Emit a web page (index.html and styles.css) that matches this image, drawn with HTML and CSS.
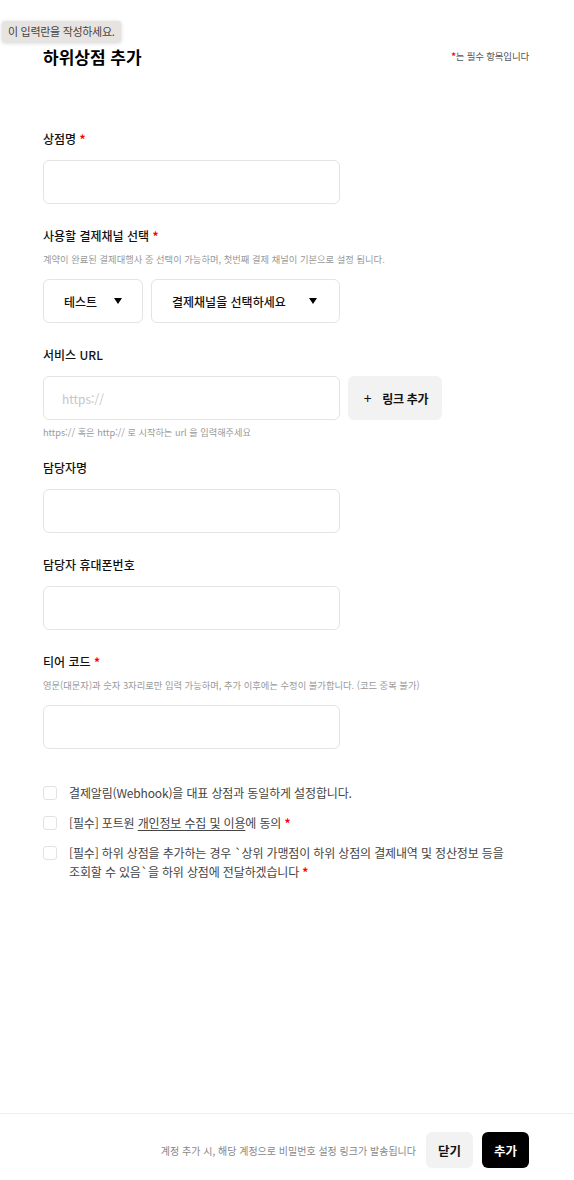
FILE: index.html
```html
<!DOCTYPE html>
<html lang="ko">
<head>
<meta charset="utf-8">
<title>하위상점 추가</title>
<link rel="stylesheet" href="styles.css">
</head>
<body>
<div class="page">
  <div class="tooltip">이 입력란을 작성하세요.</div>
  <main class="content">
    <header class="head">
      <h1 class="title">하위상점 추가</h1>
      <p class="req-note"><span class="star">*</span>는 필수 항목입니다</p>
    </header>

    <form class="form">
      <div class="field">
        <div class="field-head">
          <label class="label">상점명 <span class="star">*</span></label>
        </div>
        <div class="input"></div>
      </div>

      <div class="field">
        <div class="field-head">
          <label class="label">사용할 결제채널 선택 <span class="star">*</span></label>
          <p class="help">계약이 완료된 결제대행사 중 선택이 가능하며, 첫번째 결제 채널이 기본으로 설정 됩니다.</p>
        </div>
        <div class="row">
          <div class="select select-sm"><span>테스트</span><span class="caret"></span></div>
          <div class="select select-lg"><span>결제채널을 선택하세요</span><span class="caret"></span></div>
        </div>
      </div>

      <div class="field field-hint">
        <div class="field-head">
          <label class="label">서비스 URL</label>
        </div>
        <div class="row">
          <div class="input"><span class="placeholder">https://</span></div>
          <button type="button" class="link-btn"><span class="plus">+</span>링크 추가</button>
        </div>
        <p class="hint">https:// 혹은 http:// 로 시작하는 url 을 입력해주세요</p>
      </div>

      <div class="field">
        <div class="field-head">
          <label class="label">담당자명</label>
        </div>
        <div class="input"></div>
      </div>

      <div class="field">
        <div class="field-head">
          <label class="label">담당자 휴대폰번호</label>
        </div>
        <div class="input"></div>
      </div>

      <div class="field">
        <div class="field-head">
          <label class="label">티어 코드 <span class="star">*</span></label>
          <p class="help">영문(대문자)과 숫자 3자리로만 입력 가능하며, 추가 이후에는 수정이 불가합니다. (코드 중복 불가)</p>
        </div>
        <div class="input"></div>
      </div>
    </form>

    <ul class="checks">
      <li class="check"><span class="box"></span><span class="check-text">결제알림(Webhook)을 대표 상점과 동일하게 설정합니다.</span></li>
      <li class="check"><span class="box"></span><span class="check-text">[필수] 포트원 <u>개인정보 수집 및 이용</u>에 동의 <span class="star">*</span></span></li>
      <li class="check"><span class="box"></span><span class="check-text">[필수] 하위 상점을 추가하는 경우 `상위 가맹점이 하위 상점의 결제내역 및 정산정보 등을<br>조회할 수 있음`을 하위 상점에 전달하겠습니다 <span class="star">*</span></span></li>
    </ul>
  </main>

  <footer class="footer">
    <p class="footer-note">계정 추가 시, 해당 계정으로 비밀번호 설정 링크가 발송됩니다</p>
    <button type="button" class="btn btn-close">닫기</button>
    <button type="button" class="btn btn-add">추가</button>
  </footer>
</div>
</body>
</html>
```

FILE: styles.css
```css
* { box-sizing: border-box; }
html, body { margin: 0; padding: 0; }
body {
  font-family: "Noto Sans CJK KR", "Noto Sans", sans-serif;
  color: #222;
  background: #fff;
}
.page {
  min-height: 100vh;
  display: flex;
  flex-direction: column;
  position: relative;
}
.tooltip {
  position: absolute;
  left: 2px;
  top: 21px;
  height: 21px;
  padding: 0 6px;
  background: #e7e3e0;
  border-radius: 3px;
  box-shadow: 0 1px 4px rgba(0,0,0,0.18);
  font-size: 11px;
  line-height: 21px;
  color: #444;
  letter-spacing: -0.3px;
}
.content {
  padding: 44px 45px 0 43px;
}
.head {
  display: flex;
  justify-content: space-between;
  align-items: center;
  height: 24px;
}
.title {
  margin: 0;
  font-size: 17px;
  font-weight: 700;
  color: #000;
}
.req-note {
  margin: 0;
  font-size: 9.5px;
  color: #555;
  letter-spacing: -0.2px;
}
.star { color: #f00; font-weight: 700; }
.form {
  margin: 62px 0 0;
  display: flex;
  flex-direction: column;
  gap: 23px;
}
.field-head {
  display: flex;
  flex-direction: column;
  gap: 7px;
  margin-bottom: 12px;
}
.label {
  font-size: 12px;
  line-height: 18px;
  font-weight: 500;
  color: #111;
}
.help {
  margin: 0;
  font-size: 9.3px;
  line-height: 15px;
  color: #999;
}
.input {
  width: 297px;
  height: 44px;
  border: 1px solid #e4e4e4;
  border-radius: 6px;
  display: flex;
  align-items: center;
  padding: 0 18px;
}
.placeholder {
  font-size: 12px;
  color: #c6c6c6;
}
.row {
  display: flex;
  gap: 8px;
}
.select {
  height: 44px;
  border: 1px solid #e4e4e4;
  border-radius: 6px;
  display: flex;
  align-items: center;
  justify-content: space-between;
  padding: 0 20px;
  font-size: 12px;
  font-weight: 500;
  color: #111;
}
.select-sm { width: 100px; }
.select-lg { width: 189px; padding-right: 22px; }
.caret {
  width: 0;
  height: 0;
  border-left: 4px solid transparent;
  border-right: 4px solid transparent;
  border-top: 6px solid #000;
}
.link-btn {
  width: 94px;
  height: 44px;
  border: 0;
  border-radius: 6px;
  background: #f2f2f2;
  font-family: inherit;
  font-size: 12px;
  font-weight: 700;
  letter-spacing: -0.3px;
  color: #111;
  display: flex;
  align-items: center;
  justify-content: center;
  gap: 11px;
  padding: 0 0 0 2px;
}
.plus {
  font-weight: 400;
  font-size: 14px;
  line-height: 1;
}
.hint {
  margin: 5px 0 0;
  font-size: 9.2px;
  line-height: 14px;
  color: #999;
}
.field-hint { margin-bottom: -3px; }
.checks {
  list-style: none;
  margin: 34px 0 0;
  padding: 0;
  display: flex;
  flex-direction: column;
  gap: 11px;
}
.check {
  display: flex;
  align-items: flex-start;
  gap: 12px;
}
.box {
  flex: none;
  width: 14px;
  height: 14px;
  margin-top: 3px;
  border: 1px solid #e2e2e2;
  border-radius: 3px;
}
.check-text {
  font-size: 12px;
  line-height: 19px;
  color: #444;
  letter-spacing: -0.15px;
}
.check-text u {
  text-underline-offset: 2px;
}
.footer {
  margin-top: auto;
  border-top: 1px solid #eee;
  padding: 18px 45px 12px;
  display: flex;
  align-items: center;
  justify-content: flex-end;
  gap: 9px;
}
.footer-note {
  margin: 0 1px 0 0;
  font-size: 10px;
  color: #888;
}
.btn {
  width: 47px;
  height: 36px;
  border: 0;
  border-radius: 6px;
  font-family: inherit;
  font-size: 12.5px;
  font-weight: 700;
  padding: 0;
}
.btn-close { background: #f2f2f2; color: #111; }
.btn-add { background: #000; color: #fff; }
```
